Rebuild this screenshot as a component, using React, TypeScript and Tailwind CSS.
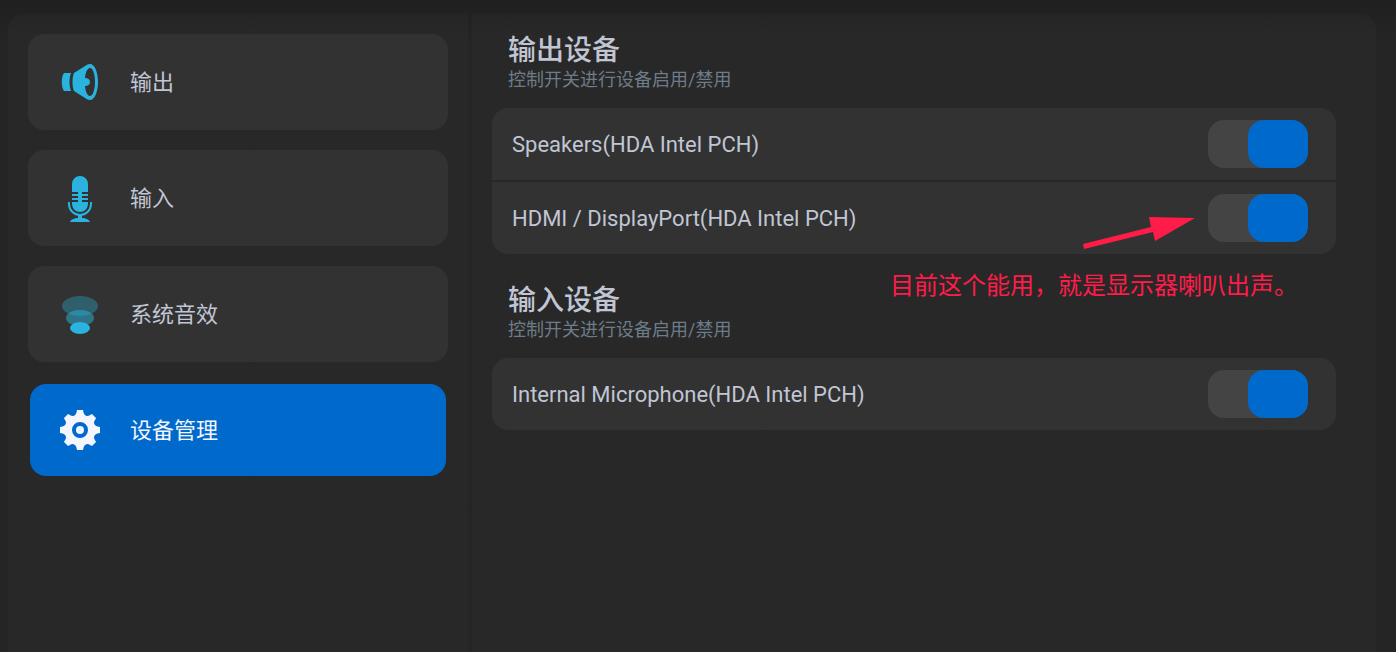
import React, { useState } from 'react';

const icons = {
  output: (
    <svg width="40" height="48" viewBox="0 0 40 48" fill="#2ab3de" aria-hidden="true">
      <path d="M4 15h7c-2 5-2 13 0 18H4c-3-4-3-14 0-18z" />
      <path
        fillRule="evenodd"
        d="M14 15 27 6.700C28 6.200 29 6 30 6c4.600 0 8 8 8 18s-3.400 18-8 18c-1 0-2-.200-3-.700L14 33c-2-4-2-14 0-18zM30 10c-2.500 0-4.500 4.200-5 10 3 0 5 1.500 5 4s-2 4-5 4c.500 5.800 2.500 10 5 10 2.800 0 5-6.200 5-14s-2.200-14-5-14z"
      />
    </svg>
  ),
  input: (
    <svg width="40" height="48" viewBox="0 0 40 48" fill="#2ab3de" aria-hidden="true">
      <path d="M12 18v-8a8 8 0 0 1 16 0v8h-6v2h6v2h-6v2h6v2h-6v2h6v2a8 8 0 0 1-16 0v-2h6v-2h-6v-2h6v-2h-6v-2h6v-2z" />
      <path d="M9 28v2a11 11 0 0 0 22 0v-2" fill="none" stroke="#2ab3de" strokeWidth="2" />
      <path d="M18 41h4v3c3 0 7 1 8 4H10c1-3 5-4 8-4z" />
    </svg>
  ),
  effects: (
    <svg width="40" height="48" viewBox="0 0 40 48" fill="#2ab3de" aria-hidden="true">
      <ellipse cx="20" cy="16" rx="18" ry="10" opacity="0.35" />
      <ellipse cx="20" cy="28" rx="14" ry="8" opacity="0.5" />
      <ellipse cx="20" cy="38" rx="10" ry="6" />
    </svg>
  ),
  devices: (
    <svg width="40" height="48" viewBox="0 0 40 48" fill="#f3f6ff" aria-hidden="true">
      <path
        fillRule="evenodd"
        d="M17 4h6c.500 4 2 6 4.500 6 1.500 0 3-1.500 4.500-2L36 12c-.500 1.500-2 3-2 4.500 0 2.500 2 4 6 4.500v6c-4 .500-6 2-6 4.500 0 1.500 1.500 3 2 4.500l-4 4c-1.500-.500-3-2-4.500-2-2.500 0-4 2-4.500 6h-6c-.500-4-2-6-4.500-6-1.500 0-3 1.500-4.500 2l-4-4c.500-1.500 2-3 2-4.500 0-2.500-2-4-6-4.500v-6c4-.500 6-2 6-4.500 0-1.500-1.500-3-2-4.500l4-4c1.500.500 3 2 4.500 2 2.500 0 4-2 4.500-6zM20 16a8 8 0 1 0 0 16 8 8 0 0 0 0-16z"
      />
      <circle cx="20" cy="24" r="4" />
    </svg>
  ),
};

const menu = [
  { id: 'output', label: '输出', icon: icons.output },
  { id: 'input', label: '输入', icon: icons.input },
  { id: 'effects', label: '系统音效', icon: icons.effects },
  { id: 'devices', label: '设备管理', icon: icons.devices },
];

function DeviceRow({ name, children }: { name: string; children?: React.ReactNode }) {
  const [enabled, setEnabled] = useState(true);

  return (
    <div className="relative bg-[#323232]">
      <label className="flex h-18 cursor-pointer items-center justify-between pr-7 pl-5">
        <span className="text-[22px] text-[#c0c6d4]">{name}</span>
        <input
          type="checkbox"
          role="switch"
          checked={enabled}
          onChange={(e) => setEnabled(e.target.checked)}
          className="peer sr-only"
        />
        <span className="flex h-12 w-25 shrink-0 rounded-2xl bg-[#444444] peer-checked:justify-end">
          <span className={enabled ? 'w-15 rounded-2xl bg-[#0069cc]' : 'w-15 rounded-2xl bg-[#6b6b6b]'} />
        </span>
      </label>
      {children}
    </div>
  );
}

function DeviceSection({ title, children }: { title: string; children: React.ReactNode }) {
  return (
    <section>
      <header className="px-4">
        <h2 className="text-[28px] leading-[34px] font-medium text-[#c0c6d4]">{title}</h2>
        <p className="text-lg leading-6 text-[#6d7c88]">控制开关进行设备启用/禁用</p>
      </header>
      <div className="mt-4 flex flex-col gap-0.5 *:first:rounded-t-2xl *:last:rounded-b-2xl">{children}</div>
    </section>
  );
}

export default function App() {
  const [active, setActive] = useState('devices');

  return (
    <div className="flex min-h-screen gap-1 bg-[#252525] bg-linear-to-b from-[#202020] to-[#252525] to-[40px] pt-3.5 pr-5 pl-2 font-['Roboto','Noto_Sans_CJK_SC',sans-serif]">
      {/* Sidebar */}
      <nav className="flex w-[460px] shrink-0 flex-col gap-5 rounded-tl-2xl bg-linear-to-b from-[#252525] to-[#282828] to-[20px] p-5">
        {menu.map((item) => (
          <button
            key={item.id}
            type="button"
            onClick={() => setActive(item.id)}
            className={
              item.id === active
                ? 'm-0.5 flex h-23 items-center gap-[30px] rounded-2xl bg-[#0069cc] px-[30px] text-[22px] text-[#f3f6ff]'
                : 'flex h-24 items-center gap-[30px] rounded-2xl bg-[#323232] px-8 text-[22px] text-[#c0c6d4]'
            }
          >
            {item.icon}
            {item.label}
          </button>
        ))}
      </nav>

      {/* Device list */}
      <main className="flex min-w-0 flex-1 flex-col gap-[30px] rounded-tr-2xl bg-linear-to-b from-[#252525] to-[#282828] to-[20px] pt-5 pr-10 pl-5">
        <DeviceSection title="输出设备">
          <DeviceRow name="Speakers(HDA Intel PCH)" />
          <DeviceRow name="HDMI / DisplayPort(HDA Intel PCH)">
            {/* Callout */}
            <svg
              className="pointer-events-none absolute top-8 right-35"
              width="114"
              height="36"
              viewBox="0 0 114 36"
              fill="#ff1c48"
              aria-hidden="true"
            >
              <path d="M113 4 73 27l-2-9L2 35 1 30l68-17-2-10z" />
            </svg>
            <p className="absolute top-[86px] right-[38px] text-2xl leading-9 whitespace-nowrap text-[#ff1c48]">
              目前这个能用，就是显示器喇叭出声。
            </p>
          </DeviceRow>
        </DeviceSection>
        <DeviceSection title="输入设备">
          <DeviceRow name="Internal Microphone(HDA Intel PCH)" />
        </DeviceSection>
      </main>
    </div>
  );
}
